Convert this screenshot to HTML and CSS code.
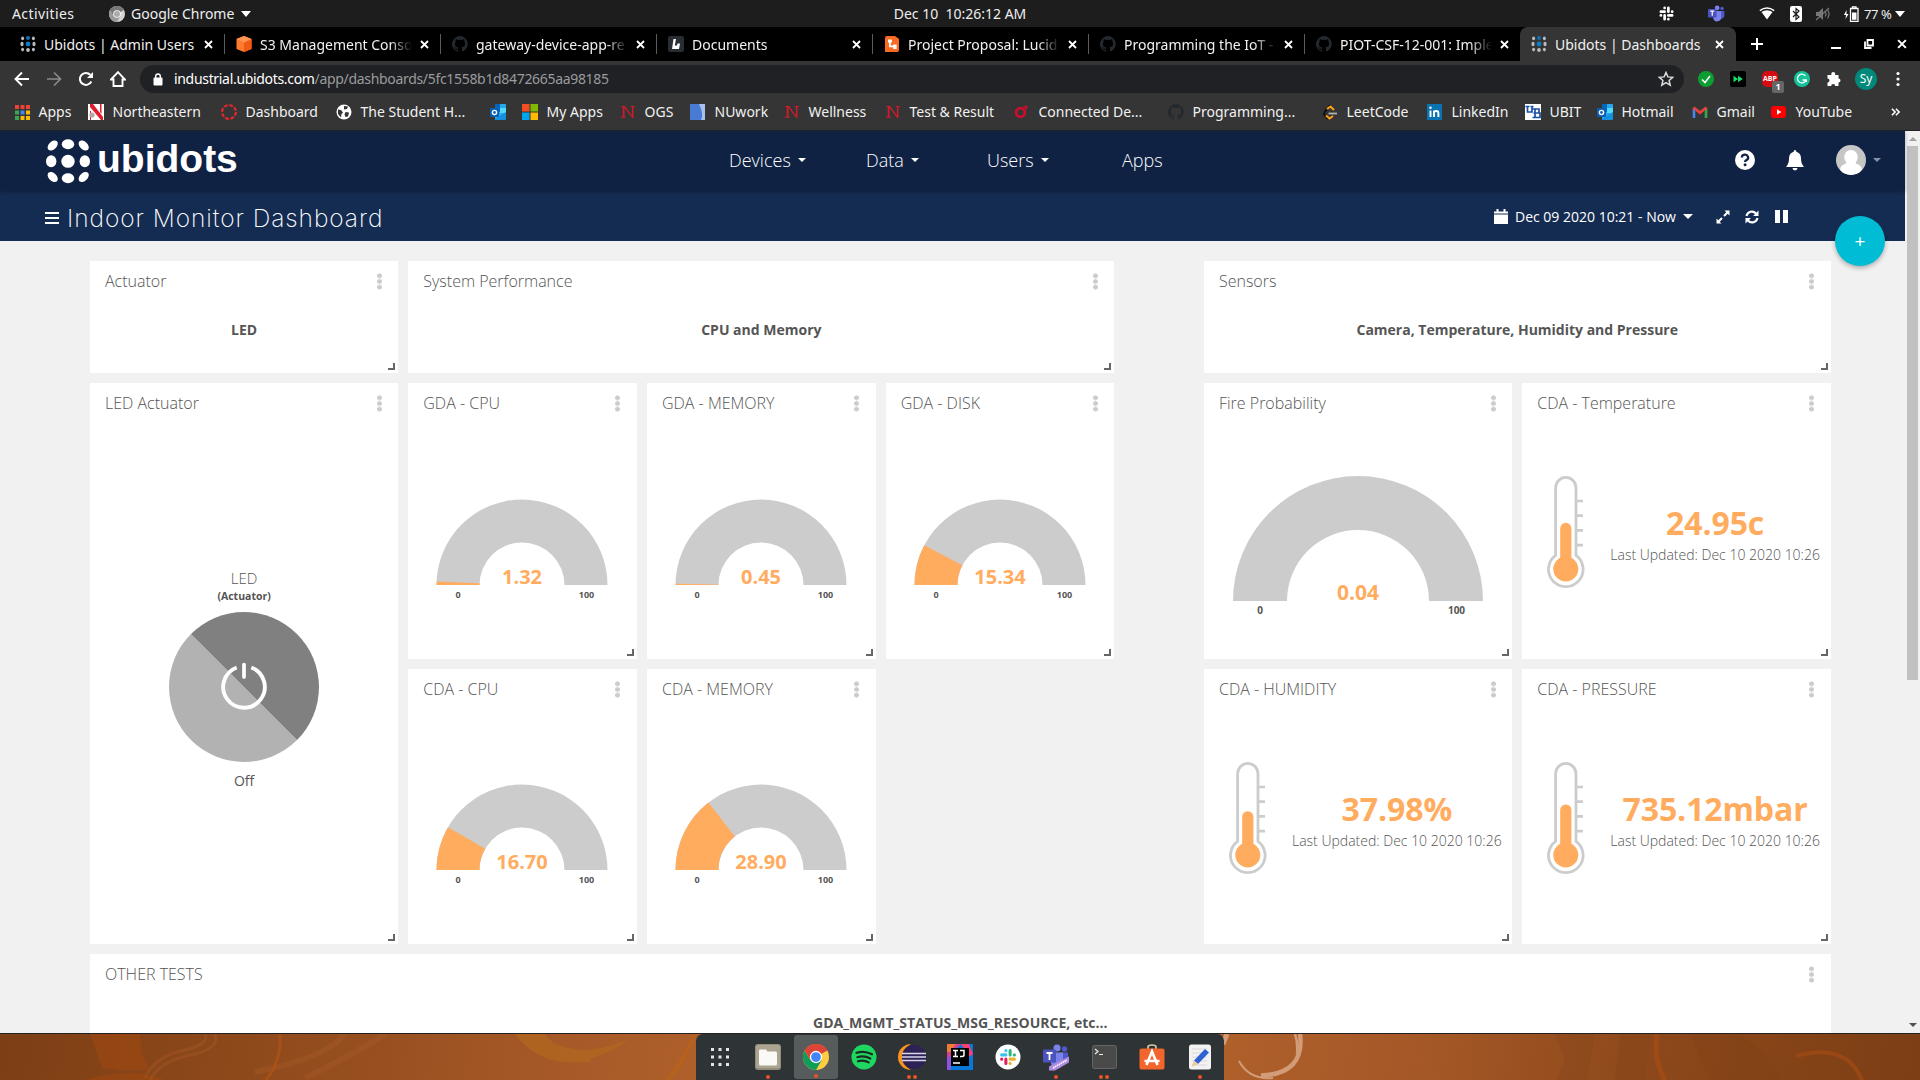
FILE: index.html
```html
<!DOCTYPE html>
<html lang="en">
<head>
<meta charset="utf-8">
<title>Ubidots | Dashboards</title>
<link rel="stylesheet" href="styles.css">
</head>
<body>
<svg class="defs" aria-hidden="true">
  <symbol id="ubi" viewBox="0 0 16 16"><g fill="#b8bcc0"><ellipse cx="2.6" cy="2.4" rx="1.5" ry="1.8"/><ellipse cx="13.4" cy="2.4" rx="1.5" ry="1.8"/><ellipse cx="2" cy="8" rx="1.6" ry="2.2"/><ellipse cx="14" cy="8" rx="1.6" ry="2.2"/><ellipse cx="2.6" cy="13.6" rx="1.5" ry="1.8"/><ellipse cx="13.4" cy="13.6" rx="1.5" ry="1.8"/><circle cx="8" cy="14" r="1.9"/></g><circle cx="8" cy="2" r="2" fill="#0b6fb8"/><circle cx="8" cy="8" r="2.4" fill="#0b7cc8"/></symbol>
  <symbol id="github" viewBox="0 0 16 16"><path fill="#24292e" d="M8 0a8 8 0 0 0-2.5 15.6c.4.1.5-.2.5-.4v-1.4c-2.2.5-2.7-1-2.7-1-.4-.9-.9-1.2-.9-1.2-.7-.5.1-.5.1-.5.8.1 1.2.8 1.2.8.7 1.300 1.900.9 2.300.7.1-.5.300-.9.500-1.100-1.800-.2-3.600-.9-3.600-4 0-.9.300-1.600.800-2.100-.1-.2-.400-1 .1-2.100 0 0 .7-.2 2.200.8a7.500 7.500 0 0 1 4 0c1.500-1 2.200-.8 2.200-.8.4 1.100.200 1.900.1 2.100.5.600.800 1.300.800 2.100 0 3.100-1.900 3.700-3.700 3.900.3.300.6.800.6 1.500v2.200c0 .2.100.5.500.4A8 8 0 0 0 8 0z"/></symbol>
  <symbol id="close" viewBox="0 0 9 9"><path d="M1 1l7 7M8 1l-7 7" stroke="#fff" stroke-width="1.8" fill="none"/></symbol>
  <symbol id="nu" viewBox="0 0 16 16"><path fill="#d41b2c" d="M0 1h4.500L12.500 12V2.500L11 1.800V1h5v.8l-1.800.7V15h-1L4 3v10l1.500.8v.7H0v-.7l2-.8V2.500L0 1.800z"/></symbol>
  <symbol id="outlook" viewBox="0 0 16 16"><path fill="#28a8ea" d="M5 0h10a1 1 0 0 1 1 1v14H5z"/><path fill="#0364b8" d="M5 0h5v8H5z"/><path fill="#50d9ff" d="M10 4h6v5h-6z"/><path fill="#1490df" d="M5 15l11-7v7a1 1 0 0 1-1 1H5z"/><rect y="4" width="9" height="9" rx="1" fill="#0a5eb5"/><circle cx="4.500" cy="8.500" r="2.100" fill="none" stroke="#fff" stroke-width="1.400"/></symbol>
  <symbol id="slack" viewBox="0 0 20 20"><g stroke-width="3.600" stroke-linecap="round"><path stroke="var(--a,#36c5f0)" d="M2.500 7.500h5M7.500 2.500v.1"/><path stroke="var(--b,#2eb67d)" d="M12.500 2.500v5M17.500 7.500h.1"/><path stroke="var(--c,#ecb22e)" d="M12.500 12.500h5M12.500 17.500v.1"/><path stroke="var(--d,#e01e5a)" d="M7.500 12.500v5M2.500 12.500h.1"/></g></symbol>
  <symbol id="teams" viewBox="0 0 26 26"><circle cx="14" cy="4.500" r="3.600" fill="#7b83eb"/><circle cx="21.500" cy="5.500" r="2.700" fill="#5059c9"/><path fill="#5059c9" d="M17 9h8v8a5 5 0 0 1-8 3z"/><path fill="#7b83eb" d="M8 9h12v9a6 6 0 0 1-12 2z"/><rect y="6" width="13" height="13" rx="1" fill="#4b53bc"/><path d="M3.500 9.500h6M6.500 9.500v7" stroke="#fff" stroke-width="1.800"/></symbol>
  <symbol id="chrome" viewBox="-12 -12 24 24"><circle r="12" fill="var(--y,#ffcd40)"/><path fill="var(--r,#db4437)" d="M0 0L-10.400-6A12 12 0 0 1 10.400-6z"/><path fill="var(--g,#0f9d58)" d="M-10.400-6A12 12 0 0 0 0 12L5.200 3-5.200 3z"/><path fill="var(--r,#db4437)" d="M0-6H10.400A12 12 0 0 0-10.400-6L-5.200 3z"/><circle r="5.700" fill="#fff"/><circle r="4.500" fill="var(--k,#4285f4)"/></symbol>
  <symbol id="tube" viewBox="0 0 44 116" overflow="visible"><path fill="#fff" stroke="#ccc" stroke-width="2.800" d="M11.600 79.300V11.800a10.200 10.400 0 0 1 20.400 0V79.300a17.300 17.300 0 1 1-20.400 0z"/><path d="M33 25h6M33 39.700h6M33 54.400h6M33 69.100h6" stroke="#ccc" stroke-width="2.700"/><circle cx="21.800" cy="93" r="12.500" fill="#ffac5f"/></symbol>
</svg>

<header class="topbar">
  <span class="activities">Activities</span>
  <svg class="appicon gray" width="16" height="16"><use href="#chrome"/></svg>
  <span class="appname">Google Chrome</span><i class="tri"></i>
  <span class="clock">Dec 10&nbsp; 10:26:12 AM</span>
  <div class="tray">
    <svg class="mono" width="15" height="15"><use href="#slack"/></svg>
    <svg class="t-teams" width="17" height="17"><use href="#teams"/></svg>
    <svg class="t-wifi" width="16" height="13" viewBox="0 0 16 13"><path d="M8 12.500L2.500 5Q8 1.500 13.500 5z" fill="#fff"/><path d="M.8 3.600Q8-1.600 15.200 3.600" fill="none" stroke="#fff" stroke-width="1.300"/></svg>
    <svg class="t-bt" width="12" height="16" viewBox="0 0 12 16"><rect width="12" height="16" rx="2" fill="#fff"/><path d="M3 5l6 6-3 2.500v-11L9 5l-6 6" fill="none" stroke="#1d1d1d" stroke-width="1.200"/></svg>
    <svg class="t-mute" width="16" height="14" viewBox="0 0 16 14"><path d="M1 5h2.500L8 1v12L3.500 9H1z" fill="#777"/><path d="M10 4.500q2 2.500 0 5M12.500 2.500q3 4.500 0 9M1 13L14 1" fill="none" stroke="#777" stroke-width="1.200"/></svg>
    <svg class="t-bat" width="15" height="16" viewBox="0 0 15 16"><path d="M2.500 4L0 9h2l-.5 4L4.500 8h-2z" fill="#fff"/><path d="M6.500 2.500h7.500v12.800H6.500zM8.500 2V.8h3.500V2" fill="none" stroke="#fff" stroke-width="1.300"/><path d="M8 6.500h4.500v7.300H8z" fill="#fff"/></svg>
    <span class="pct">77 %</span><i class="tri"></i>
  </div>
</header>

<nav class="tabs">
  <div class="tab"><svg class="fav"><use href="#ubi"/></svg><span>Ubidots | Admin Users</span><svg class="x"><use href="#close"/></svg></div>
  <div class="tab"><svg class="fav" viewBox="0 0 16 16"><path d="M8 0l7.500 3v10L8 16 .5 13V3z" fill="#ff7a2d"/><path d="M8 6.500l7.500-3.500v10L8 16z" fill="#f25a13"/><path d="M8 0l7.500 3L8 6.500.5 3z" fill="#ff9650"/></svg><span>S3 Management Conso</span><svg class="x"><use href="#close"/></svg></div>
  <div class="tab"><svg class="fav"><use href="#github"/></svg><span>gateway-device-app-re</span><svg class="x"><use href="#close"/></svg></div>
  <div class="tab"><svg class="fav" viewBox="0 0 16 16"><rect width="16" height="16" rx="2" fill="#282c33"/><path d="M5.500 3H8L6.800 9.500H9L9.500 7.500H12L11 13H4z" fill="#fff"/></svg><span>Documents</span><svg class="x"><use href="#close"/></svg></div>
  <div class="tab"><svg class="fav" viewBox="0 0 16 16"><path d="M1 2a2 2 0 0 1 2-2h8l4 3v11a2 2 0 0 1-2 2H1z" fill="#f96b23"/><path d="M4 3.500h4v3H6.800v3h2.400V8.500h3.500V13H9.200v-1.700H5V6.500H4z" fill="#fff"/></svg><span>Project Proposal: Lucid</span><svg class="x"><use href="#close"/></svg></div>
  <div class="tab"><svg class="fav"><use href="#github"/></svg><span>Programming the IoT - </span><svg class="x"><use href="#close"/></svg></div>
  <div class="tab last"><svg class="fav"><use href="#github"/></svg><span>PIOT-CSF-12-001: Imple</span><svg class="x"><use href="#close"/></svg></div>
  <div class="tab active"><svg class="fav"><use href="#ubi"/></svg><span>Ubidots | Dashboards</span><svg class="x"><use href="#close"/></svg></div>
  <svg class="newtab" width="12" height="12" viewBox="0 0 12 12"><path d="M6 0v12M0 6h12" stroke="#fff" stroke-width="2"/></svg>
  <div class="winctl">
    <svg width="10" height="10" viewBox="0 0 10 10"><path d="M0 9h10" stroke="#fff" stroke-width="2"/></svg>
    <svg width="10" height="10" viewBox="0 0 10 10"><path d="M3.500 1h5.500v5.500H3.500zM1 2.500V9h6.500" fill="none" stroke="#fff" stroke-width="1.800"/></svg>
    <svg width="10" height="10" viewBox="0 0 9 9"><use href="#close"/></svg>
  </div>
</nav>

<div class="toolbar">
  <svg class="nav" viewBox="0 0 16 16"><path d="M15 8H2M8 1.500L1.500 8 8 14.500" fill="none" stroke="#fff" stroke-width="1.900"/></svg>
  <svg class="nav" viewBox="0 0 16 16"><path d="M1 8h13M8 1.500L14.500 8 8 14.500" fill="none" stroke="#8a8a8a" stroke-width="1.700"/></svg>
  <svg class="nav" viewBox="0 0 16 16"><path d="M13.300 10.500A6 6 0 1 1 12.300 3.800" fill="none" stroke="#fff" stroke-width="2"/><path d="M15 1v6H9z" fill="#fff"/></svg>
  <svg class="nav" viewBox="0 0 16 16"><path d="M1 8.500L8 1.200l7 7.300h-2.500V15h-9V8.500z" fill="none" stroke="#fff" stroke-width="1.900"/></svg>
  <div class="omnibox">
    <svg width="10" height="13" viewBox="0 0 10 13"><rect x=".5" y="4.500" width="9" height="8" rx="1" fill="#fff"/><path d="M2.700 5V3.300a2.300 2.300 0 0 1 4.600 0V5" fill="none" stroke="#fff" stroke-width="1.400"/></svg>
    <span class="url"><b>industrial.ubidots.com</b>/app/dashboards/5fc1558b1d8472665aa98185</span>
    <svg class="star" width="16" height="16" viewBox="0 0 16 16"><path d="M8 1.500l1.900 4.400 4.800.4-3.600 3.200 1.100 4.700L8 11.700l-4.200 2.500 1.100-4.700L1.300 6.300l4.800-.4z" fill="none" stroke="#ddd" stroke-width="1.500"/></svg>
  </div>
  <div class="ext">
    <svg viewBox="0 0 16 16"><circle cx="8" cy="8" r="8" fill="#0d9e32"/><path d="M4 8.500l3 3L12 5" fill="none" stroke="#fff" stroke-width="1.500"/></svg>
    <svg viewBox="0 0 16 16"><rect width="16" height="16" rx="2" fill="#000"/><path d="M3.500 4.800L8 8l-4.500 3.200zM8 4.800L12.800 8 8 11.200z" fill="#14e06b"/></svg>
    <div class="abp"><span>ABP</span><em>1</em></div>
    <svg viewBox="0 0 16 16"><circle cx="8" cy="8" r="8" fill="#15c39a"/><path d="M11.500 5A4.400 4.400 0 1 0 12 9H8.500M12.300 8.500V11" fill="none" stroke="#fff" stroke-width="1.300"/></svg>
    <svg viewBox="0 0 16 16"><path fill="#fff" d="M1.500 4h4A2 2 0 1 1 9 4h3.500v3.500a2 2 0 1 1 0 4V15H9.200a2 2 0 1 0-4 0H1.500v-3.500a2 2 0 1 0 0-4z"/></svg>
    <div class="avatar">Sy</div>
    <svg class="kebab" viewBox="0 0 16 16" fill="#fff"><circle cx="8" cy="2.500" r="1.600"/><circle cx="8" cy="8" r="1.600"/><circle cx="8" cy="13.500" r="1.600"/></svg>
  </div>
</div>

<div class="bookmarks">
  <a style="width:74px"><svg viewBox="0 0 16 16"><g fill="#ea4335"><path d="M1 1h4v4H1zM6.500 1h4v4h-4zM12 1h4v4h-4z"/></g><path fill="#34a853" d="M1 6.500h4v4H1zM1 12h4v4H1z"/><path fill="#4285f4" d="M6.500 6.500h4v4h-4z"/><path fill="#fbbc05" d="M12 6.500h4v4h-4zM6.500 12h4v4h-4zM12 12h4v4h-4z"/></svg>Apps</a>
  <a style="width:133px"><svg viewBox="0 0 16 16"><path d="M0 0h16v16H0z" fill="#fff"/><path d="M2 0h3l10 13v3h-2L2 3z" fill="#e11b2c"/><path d="M12 0h1.500v10L12 8zM3 7v9H2V7z" fill="#e11b2c"/><circle cx="4" cy="11" r="2.600" fill="#b9a7a5"/></svg>Northeastern</a>
  <a style="width:115px"><svg viewBox="0 0 16 16"><circle cx="8" cy="8" r="6.900" fill="none" stroke="#e0282e" stroke-width="2.200" stroke-dasharray="3.900 1.520"/></svg>Dashboard</a>
  <a style="width:154px"><svg viewBox="0 0 16 16"><circle cx="8" cy="8" r="7.500" fill="#fff"/><path d="M2 5.500l3 .5 2 2.500L5.500 10 5 13.500 2 10zM8 2l4 .5-1 2.500-3 .5zM9.500 8l3.500.5-1 4-2.500.500-1-2.500z" fill="#353535"/></svg>The Student H...</a>
  <a style="width:32px"><svg><use href="#outlook"/></svg></a>
  <a style="width:98px"><svg viewBox="0 0 16 16"><path fill="#f25022" d="M0 0h7.500v7.500H0z"/><path fill="#7fba00" d="M8.500 0H16v7.500H8.500z"/><path fill="#00a4ef" d="M0 8.500h7.500V16H0z"/><path fill="#ffb900" d="M8.500 8.500H16V16H8.500z"/></svg>My Apps</a>
  <a style="width:70px"><svg class="n"><use href="#nu"/></svg>OGS</a>
  <a style="width:94px"><svg viewBox="0 0 16 16"><path d="M0 0h15v16H0z" fill="#4a7bd4"/><path d="M9 0h6v16h-4q3-6-2-16z" fill="#a9c0ec"/></svg>NUwork</a>
  <a style="width:101px"><svg class="n"><use href="#nu"/></svg>Wellness</a>
  <a style="width:129px"><svg class="n"><use href="#nu"/></svg>Test &amp; Result</a>
  <a style="width:154px"><svg viewBox="0 0 16 16"><circle cx="6.500" cy="8.500" r="4.400" fill="none" stroke="#c8102e" stroke-width="2.800"/><path d="M9.500 3h4.500M12 1.500v4" stroke="#c8102e" stroke-width="1.600"/></svg>Connected De...</a>
  <a style="width:154px"><svg><use href="#github"/></svg>Programming...</a>
  <a style="width:105px"><svg viewBox="0 0 16 16"><path d="M8.500 1L3 7.500q-2 2.500 0 4L6 15" fill="none" stroke="#111" stroke-width="2"/><path d="M5 5l3.500-2.500L12 6M4 11.500l3.500 3L11 12" fill="none" stroke="#ffa116" stroke-width="2"/><path d="M6.500 9.500H15" stroke="#b3b3b3" stroke-width="1.800"/></svg>LeetCode</a>
  <a style="width:98px"><svg viewBox="0 0 16 16"><rect width="15" height="16" fill="#0a74b3"/><path d="M3.500 6.500V13M7 13V6.500M7 9q0-2 2.200-2t2.200 2.300V13" fill="none" stroke="#fff" stroke-width="1.900"/><circle cx="3.500" cy="3.800" r="1.200" fill="#fff"/></svg>LinkedIn</a>
  <a style="width:72px"><svg viewBox="0 0 16 16"><path d="M0 0h16v16H0z" fill="#fff"/><path d="M.5 2.500h4M2.500 2.500V8h4.500V2.500M5.500 2.500h3M7.500 5h6.500v4M10 5v8.500M7.500 13.500H15V9H8.500" fill="none" stroke="#1b4fa8" stroke-width="1.700"/></svg>UBIT</a>
  <a style="width:95px"><svg><use href="#outlook"/></svg>Hotmail</a>
  <a style="width:79px"><svg viewBox="0 0 16 16"><path d="M2 14V4" stroke="#4285f4" stroke-width="2.600"/><path d="M14 14V4" stroke="#34a853" stroke-width="2.600"/><path d="M1.500 3.500L8 8.700l6.500-5.200" fill="none" stroke="#ea4335" stroke-width="2.800"/></svg>Gmail</a>
  <a style="width:120px"><svg viewBox="0 0 16 16"><rect y="2" width="15" height="12" rx="3" fill="#f00"/><path d="M6 5.300L10.500 8 6 10.700z" fill="#fff"/></svg>YouTube</a>
  <svg class="more" width="9" height="8" viewBox="0 0 11 10"><path d="M1 1l4 4-4 4M6 1l4 4-4 4" fill="none" stroke="#fff" stroke-width="2"/></svg>
</div>

<main class="viewport">
 <div class="page">
  <div class="apphead">
    <div class="logo">
      <svg width="44" height="45" viewBox="0 0 44 45" fill="#fff"><ellipse cx="22" cy="5.200" rx="6.200" ry="5"/><ellipse cx="22" cy="22.300" rx="6.700" ry="6.500"/><ellipse cx="22" cy="39.200" rx="6.200" ry="5"/><ellipse cx="5.200" cy="22.300" rx="5.200" ry="6"/><ellipse cx="38.800" cy="22.300" rx="5.200" ry="6"/><ellipse cx="6.700" cy="6.500" rx="3.900" ry="6" transform="rotate(45 6.700 6.500)"/><ellipse cx="37.700" cy="6.500" rx="3.900" ry="6" transform="rotate(-45 37.700 6.500)"/><ellipse cx="6.700" cy="38" rx="3.900" ry="6" transform="rotate(-45 6.700 38)"/><ellipse cx="37.700" cy="38" rx="3.900" ry="6" transform="rotate(45 37.700 38)"/></svg>
      <span>ubidots</span>
    </div>
    <div class="menu"><a class="m1">Devices<i></i></a><a class="m2">Data<i></i></a><a class="m3">Users<i></i></a><a class="m4">Apps</a></div>
    <div class="user">
      <svg width="20" height="20" viewBox="0 0 20 20"><circle cx="10" cy="10" r="10" fill="#fff"/><path d="M6.900 7.600a3.100 2.900 0 1 1 4.600 2.500q-1.400.8-1.400 2" fill="none" stroke="#0f2244" stroke-width="2.300"/><circle cx="10.100" cy="14.800" r="1.500" fill="#0f2244"/></svg>
      <svg class="bell" width="18" height="21" viewBox="0 0 18 21"><path d="M9 0q1.300 0 1.300 1.700Q15 3 15 8.500q0 5.500 3 8.500H0q3-3 3-8.500Q3 3 7.700 1.700 7.700 0 9 0zM6.500 18h5a2.500 2.500 0 0 1-5 0z" fill="#fff"/></svg>
      <svg class="face" width="30" height="30" viewBox="0 0 30 30"><clipPath id="fc"><circle cx="15" cy="15" r="15"/></clipPath><g clip-path="url(#fc)"><path d="M0 0h30v30H0z" fill="#c6c6c6"/><path d="M15 5a6.800 7 0 0 1 6.800 7q0 3-2.300 6 1 1 3 1.600 3 1.400 3.500 5L22 30H8l-4-5.400q.5-3.600 3.500-5 2-.6 3-1.600-2.300-3-2.300-6a6.800 7 0 0 1 6.800-7z" fill="#fff"/></g></svg>
      <i></i>
    </div>
  </div>
  <div class="subhead">
    <svg width="14" height="14" viewBox="0 0 14 14"><path d="M0 2h14M0 7h14M0 12h14" stroke="#fff" stroke-width="2"/></svg>
    <h1>Indoor Monitor Dashboard</h1>
    <div class="range">
      <svg width="14" height="15" viewBox="0 0 14 15"><path d="M0 2.500h2.500V0h2v2.500h5V0h2v2.500H14v2H0zM0 5.500h14V15H0z" fill="#fff"/></svg>
      <span>Dec 09 2020 10:21 - Now</span><i></i>
      <svg class="expand" width="14" height="14" viewBox="0 0 14 14"><path d="M8.500 0.500h5v5zM.5 8.500v5h5z" fill="#fff"/><path d="M11.500 2.500L8 6M6 8l-3.500 3.500" stroke="#fff" stroke-width="2"/></svg>
      <svg class="sync" width="14" height="14" viewBox="0 0 14 14"><path d="M1.500 6A5.500 5.500 0 0 1 11 3.500M12.500 8A5.500 5.500 0 0 1 3 10.500" fill="none" stroke="#fff" stroke-width="2.100"/><path d="M13.500.5v5.500H8zM.5 13.500V8H6z" fill="#fff"/></svg>
      <svg class="pause" width="13" height="13" viewBox="0 0 13 13"><path d="M0 0h5v13H0zM8 0h5v13H8z" fill="#fff"/></svg>
    </div>
  </div>
  <button class="fab">+</button>

  <div class="grid">
    <section class="card w1"><h2>Actuator</h2><p class="note">LED</p></section>
    <section class="card w2"><h2>System Performance</h2><p class="note">CPU and Memory</p></section>
    <section class="card w3"><h2>Sensors</h2><p class="note">Camera, Temperature, Humidity and Pressure</p></section>

    <section class="card w4"><h2>LED Actuator</h2>
      <div class="switch"><span class="name">LED</span><span class="kind">(Actuator)</span>
        <svg width="150" height="150" viewBox="-75 -75 150 150"><path d="M-53.033-53.033A75 75 0 0 0 53.033 53.033z" fill="#b2b2b2"/><path d="M-53.033-53.033A75 75 0 0 1 53.033 53.033z" fill="#808080"/><path d="M-7.300-19.500A20.800 20.800 0 1 0 7.300-19.500" fill="none" stroke="#fff" stroke-width="3.900"/><path d="M0-22.500V-10" stroke="#fff" stroke-width="3.700" stroke-linecap="round"/></svg>
        <span class="state">Off</span></div>
    </section>

    <section class="card w5"><h2>GDA - CPU</h2><svg class="gauge" viewBox="-90 -90 180 110"><path class="ring" d="M-85.500 0A85.500 85.500 0 0 1 85.500 0H42.500A42.500 42.500 0 0 0-42.500 0z"/><path class="fill" d="M-85.500 0A85.500 85.500 0 0 1-85.430-3.540L-42.460-1.760A42.500 42.500 0 0 0-42.500 0z"/><text class="val" y="-.6">1.32</text><text class="lim" x="-64" y="13">0</text><text class="lim" x="64.500" y="13">100</text></svg></section>
    <section class="card w6"><h2>GDA - MEMORY</h2><svg class="gauge" viewBox="-90 -90 180 110"><path class="ring" d="M-85.500 0A85.500 85.500 0 0 1 85.500 0H42.500A42.500 42.500 0 0 0-42.500 0z"/><path class="fill" d="M-85.500 0L-85.490-1.210L-42.500-.6V0z"/><text class="val" y="-.6">0.45</text><text class="lim" x="-64" y="13">0</text><text class="lim" x="64.500" y="13">100</text></svg></section>
    <section class="card w7"><h2>GDA - DISK</h2><svg class="gauge" viewBox="-90 -90 180 110"><path class="ring" d="M-85.500 0A85.500 85.500 0 0 1 85.500 0H42.500A42.500 42.500 0 0 0-42.500 0z"/><path class="fill" d="M-85.500 0A85.500 85.500 0 0 1-75.760-39.630L-37.660-19.700A42.500 42.500 0 0 0-42.500 0z"/><text class="val" y="-.6">15.34</text><text class="lim" x="-64" y="13">0</text><text class="lim" x="64.500" y="13">100</text></svg></section>

    <section class="card w8"><h2>Fire Probability</h2><svg class="gauge big" viewBox="-130 -130 260 150"><path class="ring" d="M-125 0A125 125 0 0 1 125 0H71A71 71 0 0 0-71 0z"/><text class="val" y="-1">0.04</text><text class="lim" x="-98" y="13">0</text><text class="lim" x="98.500" y="13">100</text></svg></section>
    <section class="card w9"><h2>CDA - Temperature</h2>
      <div class="metric"><svg width="44" height="116" viewBox="0 0 44 116"><use href="#tube"/><path class="fill" d="M16.200 90V52.400a5.600 5.600 0 0 1 11.200 0V90z"/></svg><div><strong>24.95c</strong><small>Last Updated: Dec 10 2020 10:26</small></div></div></section>

    <section class="card w10"><h2>CDA - CPU</h2><svg class="gauge" viewBox="-90 -90 180 110"><path class="ring" d="M-85.500 0A85.500 85.500 0 0 1 85.500 0H42.500A42.500 42.500 0 0 0-42.500 0z"/><path class="fill" d="M-85.500 0A85.500 85.500 0 0 1-74-42.830L-36.780-21.290A42.500 42.500 0 0 0-42.500 0z"/><text class="val" y="-.6">16.70</text><text class="lim" x="-64" y="13">0</text><text class="lim" x="64.500" y="13">100</text></svg></section>
    <section class="card w11"><h2>CDA - MEMORY</h2><svg class="gauge" viewBox="-90 -90 180 110"><path class="ring" d="M-85.500 0A85.500 85.500 0 0 1 85.500 0H42.500A42.500 42.500 0 0 0-42.500 0z"/><path class="fill" d="M-85.500 0A85.500 85.500 0 0 1-52.620-67.390L-26.150-33.500A42.500 42.500 0 0 0-42.500 0z"/><text class="val" y="-.6">28.90</text><text class="lim" x="-64" y="13">0</text><text class="lim" x="64.500" y="13">100</text></svg></section>
    <section class="card w12"><h2>CDA - HUMIDITY</h2>
      <div class="metric"><svg width="44" height="116" viewBox="0 0 44 116"><use href="#tube"/><path class="fill" d="M16.200 90V54.800a5.600 5.600 0 0 1 11.200 0V90z"/></svg><div><strong>37.98%</strong><small>Last Updated: Dec 10 2020 10:26</small></div></div></section>
    <section class="card w13"><h2>CDA - PRESSURE</h2>
      <div class="metric"><svg width="44" height="116" viewBox="0 0 44 116"><use href="#tube"/><path class="fill" d="M16.200 90V48a5.600 5.600 0 0 1 11.200 0V90z"/></svg><div><strong>735.12mbar</strong><small>Last Updated: Dec 10 2020 10:26</small></div></div></section>

    <section class="card w14"><h2>OTHER TESTS</h2><p class="note">GDA_MGMT_STATUS_MSG_RESOURCE, etc...</p></section>
  </div>
 </div>
 <div class="scroll"><i class="up"></i><b></b><i class="down"></i></div>
</main>

<footer class="desktop">
  <svg class="wall" width="1920" height="46" viewBox="0 0 1920 46" preserveAspectRatio="none">
    <g fill="#a34810" opacity=".5"><path d="M90 0h50q0 20 10 36h-30l-18-2z"/><path d="M85 46q50-14 80 0z"/></g>
    <g fill="none" stroke="#a8592a" opacity=".4"><path d="M215 0q5 14-20 20-35 6-45 26M205 0q5 10-20 16-30 6-40 28" stroke-width="3"/><path d="M345 0q-20 25-90 38M385 0q-30 20-80 44" stroke-width="6"/><path d="M1380 10q40 10 60 36" stroke-width="6"/></g>
    <path d="M280 0q2 26-14 46" fill="none" stroke="#ad5218" stroke-width="3" opacity=".8"/>
    <path d="M515 0q20 26 50 28h25v-12q-35 0-45-16zM590 16q25-4 40-12-16 14-40 21z" fill="#b56a1e" opacity=".6"/>
    <path d="M695 0q-12 30-28 46" fill="none" stroke="#b96318" stroke-width="4" opacity=".7"/>
    <g fill="#7c3e15" opacity=".22"><path d="M1555 0h40l-8 46h-30l8-22zM1620 0h30l-5 46h-30zM1690 0h50q35 25 40 46h-70z"/></g>
    <path d="M1657 0q-4 26 8 46" fill="none" stroke="#a84d16" stroke-width="5" opacity=".7"/>
    <path d="M1796 22q50-14 66 24" fill="none" stroke="#994715" stroke-width="4"/>
    <g fill="none" stroke="#d29c78"><path d="M1239 27q10 19 34 17" stroke-width="2"/><path d="M1261 41.500Q1305 40 1300 0" stroke-width="4.500"/><path d="M1297 20q1-12-2-20" stroke-width="2.500"/><path d="M1223 10l4-10" stroke-width="5"/></g>
  </svg>
  <div class="dock">
    <div><svg width="18" height="18" viewBox="0 0 18 18" fill="#e6e6e6"><path d="M0 0h3v3H0zM7.500 0h3v3h-3zM15 0h3v3h-3zM0 7.500h3v3H0zM7.500 7.500h3v3h-3zM15 7.500h3v3h-3zM0 15h3v3H0zM7.500 15h3v3h-3zM15 15h3v3h-3z"/></svg></div>
    <div><svg width="26" height="26" viewBox="0 0 26 26"><rect width="26" height="26" rx="3" fill="#928c7b"/><rect x="1" y="1" width="24" height="23" rx="2" fill="#aaa491"/><path d="M4 6.500q0-1 1-1h6l1.500 2h8q1.500 0 1.500 1.500v11q0 1.500-1.500 1.500H5.500Q4 21.500 4 20z" fill="#faf9f7"/></svg><i></i></div>
    <div class="on"><svg width="26" height="26"><use href="#chrome"/></svg><i></i></div>
    <div><svg width="26" height="26" viewBox="0 0 26 26"><circle cx="13" cy="13" r="12.500" fill="#1ed760"/><path d="M5.500 8.800q8-2.600 15.500 1.500M6.300 13.200q7-2 13 1.300M7 17.200q6-1.600 10.600 1.200" fill="none" stroke="#1b2a22" stroke-width="2.200" stroke-linecap="round"/></svg></div>
    <div><svg width="28" height="26" viewBox="0 0 28 26"><path d="M13 0a13 13 0 0 0 0 26q-9-5-9-13T13 0z" fill="#f7941e"/><circle cx="16" cy="13" r="12" fill="#2c2255"/><path d="M4 9.500h24M4 13h24M4 16.500h24" stroke="#d9d6ea" stroke-width="1.600"/></svg><i></i><i></i></div>
    <div><svg width="26" height="26" viewBox="0 0 26 26"><path d="M0 0h26v26H0z" fill="#0878d8"/><path d="M0 0h14L4 10v16H0z" fill="#d63f8f"/><path d="M0 0h9L3 8H0z" fill="#ee7b36"/><path d="M14 0h8l4 10-4 3z" fill="#fc3f72"/><path d="M0 14l4-2v14H0z" fill="#8a53e0"/><path d="M4 4h18v18H4z" fill="#000"/><path d="M6 6.500h5M8.500 6.500v6M6 12.500h5M13 6.500h4v4.500q0 1.500-2 1.500h-2M6 19h7" stroke="#fff" stroke-width="1.500" fill="none"/></svg></div>
    <div><svg width="26" height="26" viewBox="0 0 26 26"><circle cx="13" cy="13" r="12.500" fill="#fff"/><use href="#slack" x="4.500" y="4.500" width="17" height="17"/></svg></div>
    <div><svg width="27" height="27" viewBox="0 0 27 27"><use href="#teams" width="26" height="26"/><path d="M6 23L26 13v6L12 27H6z" fill="#b08be0"/><path d="M10 24.500l14-8" stroke="#fff" stroke-width="1.600" stroke-dasharray="1.500 .7"/></svg><i></i></div>
    <div><svg width="25" height="24" viewBox="0 0 25 24"><rect x=".5" y=".5" width="24" height="23" rx="2" fill="#4a4a4a" stroke="#666"/><path d="M3 4l3 2.500L3 9M7 9.500h4" fill="none" stroke="#eee" stroke-width="1.200"/></svg><i></i><i></i></div>
    <div><svg width="26" height="26" viewBox="0 0 26 26"><path d="M9 5V3q0-2 4-2t4 2v2" fill="none" stroke="#d9c9a8" stroke-width="1.700"/><rect x=".5" y="4.500" width="25" height="21" rx="2" fill="#f2652c"/><path d="M7.500 21L13 7.500 18.500 21M5.500 17h15" fill="none" stroke="#fff" stroke-width="2.600"/></svg></div>
    <div><svg width="24" height="26" viewBox="0 0 24 26"><rect x="1" y=".5" width="22" height="25" rx="2.500" fill="#f2f2f2"/><path d="M4 5h15M4 9h15M4 13h15M4 17h15M4 21h15" stroke="#d8d8d8"/><path d="M17 5l4 3.500L10 20l-4-3.500z" fill="#2e62d4"/><path d="M6 16.500l4 3.500-6.500 3z" fill="#f0c796"/></svg><i></i></div>
  </div>
</footer>
</body>
</html>
```

FILE: styles.css
```css
* { box-sizing: border-box; }
html, body { margin: 0; height: 1080px; overflow: hidden; }
body { display: flex; flex-direction: column; width: 1920px; background: #000; color: #fff; font: 14px "Noto Sans", "Open Sans", sans-serif; }
svg { flex: none; display: block; }
.defs { position: absolute; width: 0; height: 0; }
i, em { font-style: normal; }

/* desktop top bar */
.topbar { height: 27px; flex: none; display: flex; align-items: center; background: #1d1d1d; color: #eee; padding-left: 12px; position: relative; white-space: nowrap; }
.activities { width: 97px; letter-spacing: .4px; }
.gray { --y: #d5d5d5; --r: #777; --g: #999; --k: #aaa; }
.appname { margin-left: 6px; width: 110px; }
.tri { border: 5px solid transparent; border-top: 6px solid #fff; border-bottom: 0; }
.clock { width: 400px; text-align: center; position: absolute; left: 760px; }
.tray { margin-left: auto; display: flex; align-items: center; padding-right: 15px; }
.mono { --a: #fff; --b: #fff; --c: #fff; --d: #fff; }
.t-teams { margin-left: 34px; }
.t-wifi { margin-left: 34px; }
.t-bt { margin-left: 15px; }
.t-mute { margin-left: 13px; }
.t-bat { margin-left: 13px; }
.pct { width: 31px; margin-left: 5px; font-size: 13px; letter-spacing: -.4px; }

/* browser chrome */
.tabs { height: 34px; flex: none; display: flex; align-items: center; padding-left: 8px; background: #000; }
.tab { width: 216px; height: 34px; display: flex; align-items: center; padding-left: 12px; position: relative; }
.tab::after { content: ""; position: absolute; right: -1px; top: 7px; width: 1px; height: 20px; background: #5a5a5a; }
.tab.last::after, .tab.active::after { display: none; }
.fav { width: 16px; height: 16px; }
.tab span { width: 154px; margin: 0 6px 0 8px; overflow: hidden; white-space: nowrap; color: #f1f1f1; -webkit-mask: linear-gradient(90deg, #000 130px, transparent 152px); mask: linear-gradient(90deg, #000 130px, transparent 152px); }
.tab:first-child span, .tab.active span { -webkit-mask: none; mask: none; }
.x { width: 9px; height: 9px; }
.tab.active { background: #353535; border-radius: 8px 8px 0 0; padding-left: 11px; }
.newtab { margin-left: 15px; }
.winctl { margin-left: auto; display: flex; gap: 23px; padding-right: 13px; }
.toolbar { height: 36px; flex: none; display: flex; align-items: center; background: #353535; padding-left: 14px; }
.nav { width: 16px; height: 16px; margin-right: 16px; }
.omnibox { margin-left: -2px; width: 1544px; height: 28px; border-radius: 14px; background: #202124; display: flex; align-items: center; padding: 0 10px 0 13px; }
.url { margin: -1px 0 0 11px; color: #9a9b9d; letter-spacing: -.32px; }
.url b { font-weight: 400; color: #fff; }
.star { margin-left: auto; }
.ext { display: flex; align-items: center; margin-left: 14px; gap: 16px; }
.ext svg { width: 16px; height: 16px; }
.abp { width: 16px; height: 16px; border-radius: 5px; background: #d40d12; font: bold 7px/16px "Open Sans", sans-serif; position: relative; text-align: center; }
.abp span { margin: 0 -2px; }
.abp em { position: absolute; left: 10px; top: 10px; width: 12px; height: 12px; background: #666; border-radius: 2px; font: bold 9px/12px "Open Sans", sans-serif; }
.avatar { width: 22px; height: 22px; margin: 0 -3px; border-radius: 50%; background: #00897b; font-size: 12px; line-height: 21px; text-align: center; }
.bookmarks { height: 34px; flex: none; display: flex; align-items: center; background: #353535; padding: 0 0 4px 14px; border-bottom: 1px solid #222; }
.bookmarks a { display: flex; align-items: center; gap: 8.500px; white-space: nowrap; color: #f1f1f1; }
.bookmarks a svg { width: 16px; height: 16px; }
.bookmarks a .n { width: 14px; height: 14px; margin: 0 1px; }

/* page */
.viewport { height: 902px; flex: none; display: flex; background: #f1f1f1; overflow: hidden; font-family: "Open Sans", sans-serif; }
.page { width: 1905px; position: relative; }
.apphead { height: 60px; background: #0f2244; display: flex; align-items: center; padding: 0 0 2px 46px; box-shadow: 0 1px 4px rgba(0,0,0,.3); position: relative; }
.logo { display: flex; align-items: center; width: 683px; padding-top: 2px; }
.logo span { font: 700 39px/40px "Liberation Sans", sans-serif; margin: -5px 0 0 7px; }
.menu { display: flex; font-size: 18px; font-weight: 300; }
.menu a { display: flex; align-items: center; }
.menu i { border: 4px solid transparent; border-top-color: #fff; border-bottom: 0; margin-left: 7px; }
.m1 { width: 137px; } .m2 { width: 121px; } .m3 { width: 135px; }
.user { margin-left: auto; padding-right: 24px; display: flex; align-items: center; }
.bell { margin-left: 31px; }
.face { margin-left: 32px; }
.user i { margin-left: 7px; border: 4px solid transparent; border-top-color: #8390a5; border-bottom: 0; }
.subhead { height: 50px; background: #152c52; display: flex; align-items: center; padding-left: 45px; padding-top: 2px; }
.subhead > svg { margin-top: 1px; }
.subhead h1 { margin: 1px 0 0 8px; font: 200 24.500px/34px "Inter", sans-serif; letter-spacing: .950px; white-space: nowrap; }
.range { margin-left: auto; margin-right: 117px; display: flex; align-items: center; font-size: 14px; white-space: nowrap; margin-top: -1px; }
.range span { margin-left: 7px; width: 161px; }
.range i { margin-left: 7px; margin-right: 1px; border: 5px solid transparent; border-top-color: #fff; border-bottom: 0; }
.expand { margin-left: 22px; } .sync { margin-left: 15px; } .pause { margin-left: 16px; }
.fab { position: absolute; left: 1835px; top: 85px; width: 50px; height: 50px; border: 0; border-radius: 50%; background: #00bcd4; color: #fff; font: 400 19px/46px "Open Sans", sans-serif; padding: 0; box-shadow: 0 2px 5px rgba(0,0,0,.3); }
.grid { margin: 20px 0 0 90px; width: 1740.500px; display: grid; grid-template-columns: repeat(22, minmax(0, 1fr)); grid-template-rows: 112px 275.500px 275.500px 112px; gap: 10px; }
.card { background: #fff; position: relative; display: flex; flex-direction: column; align-items: center; color: #555; min-width: 0; }
.card h2 { align-self: stretch; margin: 0; height: 40px; padding-left: 15px; font-size: 16px; line-height: 40px; font-weight: 300; white-space: nowrap; color: #555; }
/* three-dot card menu */
.card::before { content: ""; position: absolute; right: 16.500px; top: 12px; width: 5px; height: 17px; background: radial-gradient(circle at 2.500px 2.800px, #ccc 2.100px, transparent 2.700px) 0 0 / 5px 5.700px; }
/* resize corner */
.card::after { content: ""; position: absolute; right: 3px; bottom: 3px; width: 5px; height: 5px; border: solid #666; border-width: 0 2px 2px 0; }
.w1 { grid-area: 1 / 1 / 2 / 5; } .w2 { grid-area: 1 / 5 / 2 / 14; } .w3 { grid-area: 1 / 15 / 2 / 23; }
.w4 { grid-area: 2 / 1 / 4 / 5; }
.w5 { grid-area: 2 / 5 / 3 / 8; } .w6 { grid-area: 2 / 8 / 3 / 11; } .w7 { grid-area: 2 / 11 / 3 / 14; }
.w8 { grid-area: 2 / 15 / 3 / 19; } .w9 { grid-area: 2 / 19 / 3 / 23; }
.w10 { grid-area: 3 / 5 / 4 / 8; } .w11 { grid-area: 3 / 8 / 4 / 11; }
.w12 { grid-area: 3 / 15 / 4 / 19; } .w13 { grid-area: 3 / 19 / 4 / 23; }
.w14 { grid-area: 4 / 1 / 5 / 23; }
.note { margin: 19px 0 0; font-size: 14px; line-height: 20px; font-weight: 700; }
.gauge { width: 180px; height: 110px; margin-top: 71.500px; margin-left: -.4px; }
.gauge.big { width: 260px; height: 150px; margin-top: 47.500px; margin-left: 0; }
.ring { fill: #ccc; }
.fill { fill: #ffac5f; }
.val { fill: #ffac5f; font-size: 20px; font-weight: 700; text-anchor: middle; }
.lim { fill: #555; font-size: 9px; font-weight: 700; text-anchor: middle; }
.big .val { font-size: 21px; }
.big .lim { font-size: 10px; }
.switch { display: flex; flex-direction: column; align-items: center; margin-top: 145px; }
.name { font-size: 15px; line-height: 20px; font-weight: 300; }
.kind { font-size: 10.500px; line-height: 16px; font-weight: 700; margin-bottom: 8px; }
.state { font-size: 14px; line-height: 20px; margin-top: 9px; }
.metric { align-self: stretch; display: flex; margin-top: 53px; padding-left: 22px; }
.metric div { flex: 1; margin-left: 11.500px; display: flex; flex-direction: column; align-items: center; padding-top: 25px; }
.metric strong { font-size: 32px; line-height: 44px; letter-spacing: -.1px; color: #ffac5f; }
.metric small { font-size: 14px; line-height: 20px; font-weight: 300; white-space: nowrap; }
.scroll { width: 15px; background: #f1f1f1; display: flex; flex-direction: column; align-items: center; }
.scroll b { width: 11px; height: 534px; background: #c1c1c1; }
.scroll .up { margin: 6px 0 5px; border: 4px solid transparent; border-bottom-color: #a3a3a3; border-top: 0; }
.scroll .down { margin: auto 0 6px; border: 4px solid transparent; border-top-color: #505050; border-bottom: 0; }

/* desktop background and dock */
.desktop { height: 47px; flex: none; border-top: 1px solid #222; position: relative; display: flex; justify-content: center; background: linear-gradient(100deg, #7d3e14 0, #914b1c 15%, #a55827 28%, #b0612b 38%, #b0612b 62%, #a55827 74%, #8c481a 86%, #7d3e14 100%); }
.wall { position: absolute; left: 0; top: 0; }
.dock { width: 528px; height: 46px; background: #2e3436; border-radius: 7px 7px 0 0; display: flex; position: relative; }
.dock div { width: 48px; height: 46px; display: flex; flex-wrap: wrap; justify-content: center; align-items: flex-start; align-content: flex-start; column-gap: 2px; }
.dock div > svg { height: 46px; margin: 0 10px; }
.dock div > i { width: 4px; height: 4px; border-radius: 50%; background: #e95420; margin-top: -5px; }
.dock .on { background: #565b5c; width: 44px; margin: 1px 2px 0; height: 44px; border-radius: 3px; }
.dock .on > svg { height: 44px; margin: 0 9px; }
```
